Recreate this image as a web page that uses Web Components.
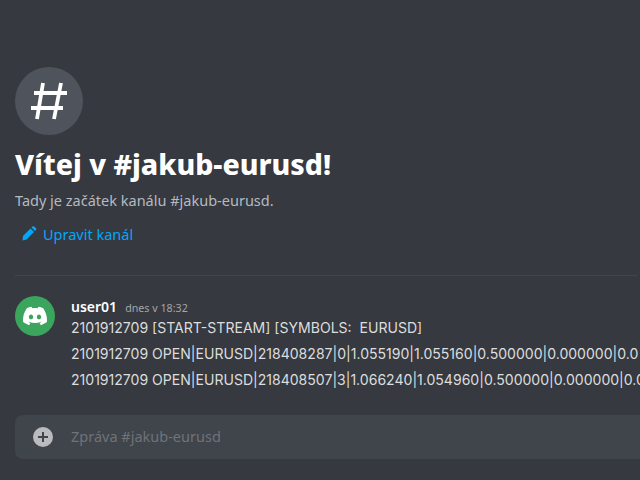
<!DOCTYPE html>
<html lang="cs">
<head>
<meta charset="utf-8">
<title>#jakub-eurusd</title>
<style>
    html, body { margin: 0; height: 100%; overflow: hidden; background: #36393f; }
    body { display: flex; flex-direction: column; font-family: "Noto Sans", sans-serif; }
</style>
</head>
<body>
<chat-view>
    <channel-welcome channel="jakub-eurusd"></channel-welcome>
    <chat-message author="user01" time="dnes v 18:32">
        <message-line>2101912709 [START-STREAM] [SYMBOLS:&nbsp; EURUSD]</message-line>
        <message-line>2101912709 OPEN|EURUSD|218408287|0|1.055190|1.055160|0.500000|0.000000|0.0</message-line>
        <message-line>2101912709 OPEN|EURUSD|218408507|3|1.066240|1.054960|0.500000|0.000000|0.0</message-line>
    </chat-message>
    <chat-composer placeholder="Zpráva #jakub-eurusd"></chat-composer>
</chat-view>

<script>
// Hlavní sloupec kanálu
class ChatView extends HTMLElement {
    constructor() {
        super();
        this.attachShadow({ mode: 'open' });
        this.shadowRoot.innerHTML = `
            <style>
                :host {
                    display: flex;
                    flex-direction: column;
                    height: 480px;
                    box-sizing: border-box;
                    padding-top: 67px;
                    overflow: hidden;
                }
            </style>
            <slot></slot>
        `;
    }
}

class ChannelWelcome extends HTMLElement {
    constructor() {
        super();
        this.attachShadow({ mode: 'open' });
    }

    connectedCallback() {
        const channel = this.getAttribute('channel') || '';
        this.shadowRoot.innerHTML = `
            <style>
                :host {
                    display: block;
                    margin: 0 3px 0 15px;
                    height: 209px;
                    box-sizing: border-box;
                    border-bottom: 1px solid #42454c;
                }
                .icon {
                    width: 68px;
                    height: 68px;
                    border-radius: 50%;
                    background: #4f545c;
                    display: flex;
                    align-items: center;
                    justify-content: center;
                }
                h1 {
                    margin: 9px 0 0;
                    font-size: 28.500px;
                    line-height: 40px;
                    font-weight: 800;
                    color: #fff;
                }
                p {
                    margin: 6px 0 0;
                    font-size: 14.500px;
                    line-height: 20px;
                    color: #b5bac1;
                }
                a {
                    display: flex;
                    align-items: center;
                    gap: 6px;
                    margin: 14px 0 0 6px;
                    font-size: 14.500px;
                    line-height: 20px;
                    color: #00a8fc;
                }
            </style>
            <div class="icon">
                <svg width="42" height="42" viewBox="0 0 42 42" fill="none" stroke="#fff" stroke-width="3.800">
                    <path d="M15 3 9 39M33 3 26 39M6 13H39M3 28H35"/>
                </svg>
            </div>
            <h1>Vítej v #${channel}!</h1>
            <p>Tady je začátek kanálu #${channel}.</p>
            <a>
                <svg width="16" height="16" viewBox="0 0 16 16" fill="#00a8fc">
                    <path d="M2 10 9.500 2.500 13 6 5.500 13.500 1.500 14.500Z"/>
                    <path d="M10.500 1.500 11.500.500C12 0 12.700 0 13.200.500L15 2.300C15.500 2.800 15.500 3.500 15 4L14 5Z"/>
                </svg>
                Upravit kanál
            </a>
        `;
    }
}

class ChatMessage extends HTMLElement {
    constructor() {
        super();
        this.attachShadow({ mode: 'open' });
    }

    connectedCallback() {
        const author = this.getAttribute('author');
        const time = this.getAttribute('time');
        this.shadowRoot.innerHTML = `
            <style>
                :host {
                    display: grid;
                    grid-template-columns: 40px 1fr;
                    column-gap: 16px;
                    margin: 20px 0 0 15px;
                    height: 119px;
                }
                .avatar {
                    width: 40px;
                    height: 40px;
                    border-radius: 50%;
                    background: #3ba55d;
                    display: flex;
                    align-items: center;
                    justify-content: center;
                }
                .body { min-width: 0; overflow: hidden; }
                .head {
                    display: flex;
                    align-items: baseline;
                    gap: 8px;
                    height: 21px;
                    line-height: 21px;
                }
                .author { font-size: 14px; font-weight: 600; color: #fff; }
                .time { font-size: 10.700px; color: #a3a6aa; }
            </style>
            <div class="avatar">
                <svg width="24" height="24" viewBox="0 0 24 24" fill="#fff">
                    <path d="M20.317 4.3698a19.7913 19.7913 0 00-4.8851-1.5152.0741.0741 0 00-.0785.0371c-.211.3753-.4447.8648-.6083 1.2495-1.8447-.2762-3.68-.2762-5.4868 0-.1636-.3933-.4058-.8742-.6177-1.2495a.077.077 0 00-.0785-.037 19.7363 19.7363 0 00-4.8852 1.515.0699.0699 0 00-.0321.0277C.5334 9.0458-.319 13.5799.0992 18.0578a.0824.0824 0 00.0312.0561c2.0528 1.5076 4.0413 2.4228 5.9929 3.0294a.0777.0777 0 00.0842-.0276c.4616-.6304.8731-1.2952 1.226-1.9942a.076.076 0 00-.0416-.1057c-.6528-.2476-1.2743-.5495-1.8722-.8923a.077.077 0 01-.0076-.1277c.1258-.0943.2517-.1923.3718-.2914a.0743.0743 0 01.0776-.0105c3.9278 1.7933 8.18 1.7933 12.0614 0a.0739.0739 0 01.0785.0095c.1202.099.246.1981.3728.2924a.077.077 0 01-.0066.1276 12.2986 12.2986 0 01-1.873.8914.0766.0766 0 00-.0407.1067c.3604.698.7719 1.3628 1.225 1.9932a.076.076 0 00.0842.0286c1.961-.6067 3.9495-1.5219 6.0023-3.0294a.077.077 0 00.0313-.0552c.5004-5.177-.8382-9.6739-3.5485-13.6604a.061.061 0 00-.0312-.0286zM8.02 15.3312c-1.1825 0-2.1569-1.0857-2.1569-2.419 0-1.3332.9555-2.4189 2.157-2.4189 1.2108 0 2.1757 1.0952 2.1568 2.419 0 1.3332-.9555 2.4189-2.1569 2.4189zm7.9748 0c-1.1825 0-2.1569-1.0857-2.1569-2.419 0-1.3332.9554-2.4189 2.1569-2.4189 1.2108 0 2.1757 1.0952 2.1568 2.419 0 1.3332-.946 2.4189-2.1568 2.4189Z"/>
                </svg>
            </div>
            <div class="body">
                <div class="head">
                    <span class="author">${author}</span>
                    <span class="time">${time}</span>
                </div>
                <slot></slot>
            </div>
        `;
    }
}

class MessageLine extends HTMLElement {
    constructor() {
        super();
        this.attachShadow({ mode: 'open' });
        this.shadowRoot.innerHTML = `
            <style>
                :host {
                    display: block;
                    height: 26px;
                    line-height: 22px;
                    font-family: Inter, sans-serif;
                    font-size: 14.050px;
                    color: #dcddde;
                    white-space: nowrap;
                }
            </style>
            <slot></slot>
        `;
    }
}

class ChatComposer extends HTMLElement {
    constructor() {
        super();
        this.attachShadow({ mode: 'open' });
    }

    connectedCallback() {
        this.shadowRoot.innerHTML = `
            <style>
                :host {
                    display: flex;
                    align-items: center;
                    gap: 18px;
                    height: 44px;
                    margin-left: 15px;
                    padding-left: 18px;
                    border-radius: 8px 0 0 8px;
                    background: #40444b;
                }
                .text { font-size: 14.500px; color: #6f7378; position: relative; top: -1px; }
            </style>
            <svg width="20" height="20" viewBox="0 0 20 20">
                <circle cx="10" cy="10" r="10" fill="#b9bbbe"/>
                <path d="M10 5V15M5 10H15" stroke="#40444b" stroke-width="2"/>
            </svg>
            <span class="text">${this.getAttribute('placeholder')}</span>
        `;
    }
}

customElements.define('chat-view', ChatView);
customElements.define('channel-welcome', ChannelWelcome);
customElements.define('chat-message', ChatMessage);
customElements.define('message-line', MessageLine);
customElements.define('chat-composer', ChatComposer);
</script>
</body>
</html>
